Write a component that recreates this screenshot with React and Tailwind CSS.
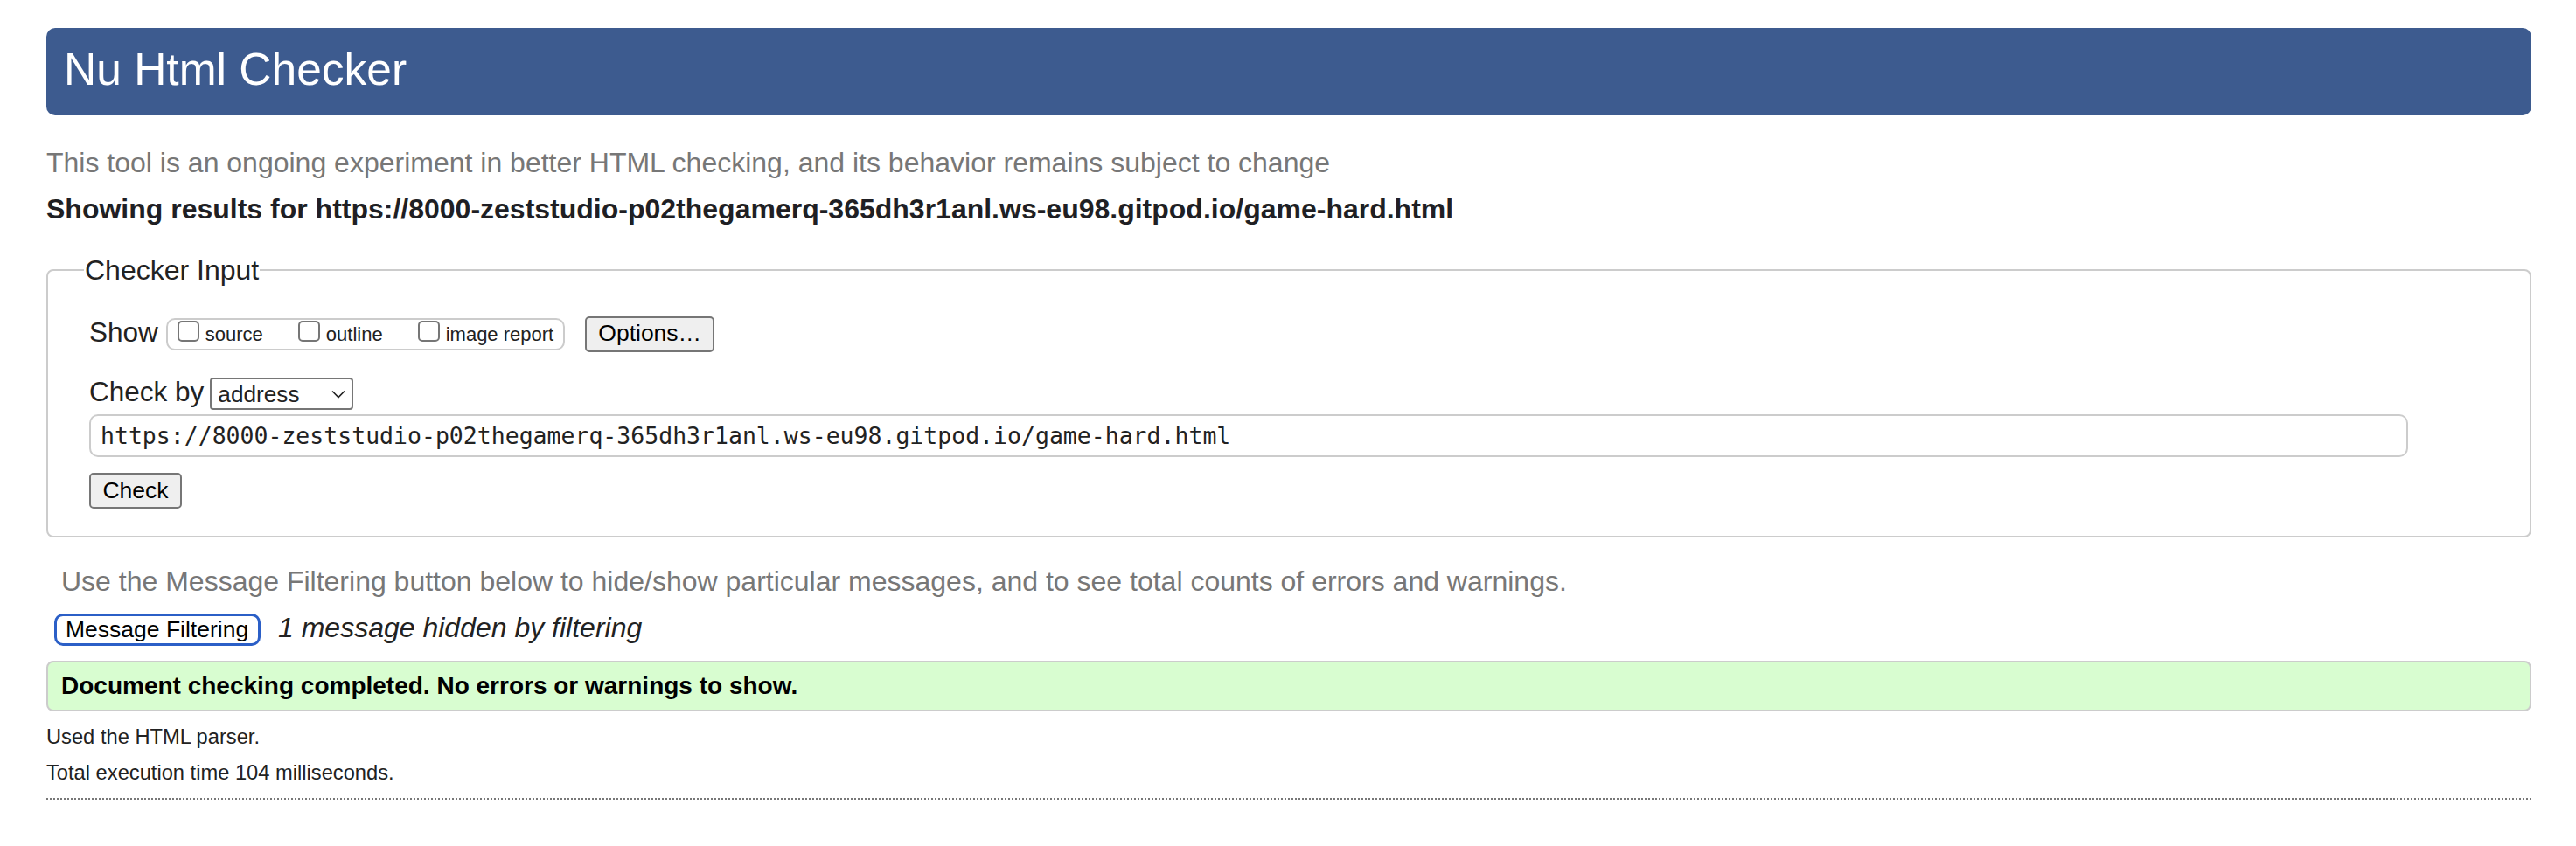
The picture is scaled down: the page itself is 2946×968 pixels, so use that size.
import React from 'react';

const sans = "font-['Liberation_Sans',Arial,sans-serif]";

const Checkbox = ({ label }) => (
  <label className="flex items-end gap-[7px]">
    <span className="block w-[25px] h-[24px] rounded-[5px] border-2 border-[#767676] bg-white" />
    <span className="text-[22px] leading-[16px] text-[#222]">{label}</span>
  </label>
);

const Button = ({ children, className = '' }) => (
  <button
    type="button"
    className={`h-[41px] px-[12px] flex items-center rounded-[5px] border-2 border-[#767676] bg-[#efefef] text-[26.5px] text-black ${className}`}
  >
    {children}
  </button>
);

export default function App() {
  return (
    <div className={`min-h-screen bg-white pl-[53px] pr-[51px] pt-[32px] text-[#222] ${sans}`}>
      <h1 className="h-[100px] rounded-[10px] bg-[#3d5b8f] pl-[20px] pt-[17px] text-[51.5px] leading-[60px] text-white">
        Nu Html Checker
      </h1>

      <p className="mt-[34px] text-[32px] leading-[40px] text-[#777]">
        This tool is an ongoing experiment in better HTML checking, and its behavior remains subject to change
      </p>
      <p className="mt-[13px] text-[32px] font-bold leading-[40px] text-[#1f1f24]">
        Showing results for https://8000-zeststudio-p02thegamerq-365dh3r1anl.ws-eu98.gitpod.io/game-hard.html
      </p>

      <fieldset className="mt-[32px] rounded-[8px] border-2 border-[#ccc] pl-[47px] pr-[20px] pt-[34px] pb-[31px]">
        <legend className="-ml-[6px] px-[1px] text-[32px] leading-[36px]">Checker Input</legend>

        <div className="flex h-[42px] items-center">
          <span className="pb-[4px] text-[31.5px] leading-[40px]">Show</span>
          <div className="ml-[9px] flex h-[37px] items-start gap-[40px] rounded-[10px] border-2 border-[#ccc] pl-[11px] pr-[11px] pt-[1px]">
            <Checkbox label="source" />
            <Checkbox label="outline" />
            <Checkbox label="image report" />
          </div>
          <Button className="ml-[23px] w-[148px] justify-center">Options…</Button>
        </div>

        <div className="mt-[29px] flex h-[37px] items-center">
          <span className="pb-[5px] text-[31.5px] leading-[40px]">Check by</span>
          <div className="ml-[7px] flex h-[37px] w-[164px] items-center justify-between rounded-[4px] border-2 border-[#767676] bg-white pl-[7px] pr-[7px]">
            <span className="text-[26.2px] leading-[30px]">address</span>
            <svg width="16" height="10" viewBox="0 0 16 10" fill="none">
              <path d="M1 1.5 L8 8.5 L15 1.5" stroke="#222" strokeWidth="1.6" />
            </svg>
          </div>
        </div>

        <div className="mt-[5px] flex h-[49px] w-[2652px] items-center rounded-[10px] border-2 border-[#ccc] pl-[11px]">
          <span className="font-['DejaVu_Sans_Mono',monospace] text-[26.5px] leading-[32px] text-[#222]">
            https://8000-zeststudio-p02thegamerq-365dh3r1anl.ws-eu98.gitpod.io/game-hard.html
          </span>
        </div>

        <Button className="mt-[18px] w-[106px] justify-center">Check</Button>
      </fieldset>

      <p className="mt-[30px] pl-[17px] text-[32px] leading-[40px] text-[#777]">
        Use the Message Filtering button below to hide/show particular messages, and to see total counts of errors and warnings.
      </p>

      <div className="mt-[17px] flex h-[37px] items-center pl-[9px]">
        <button
          type="button"
          className="flex h-[37px] w-[236px] items-center rounded-[10px] border-[3px] border-[#2b5fc7] bg-white pl-[10px] text-[26.5px] text-black"
        >
          Message Filtering
        </button>
        <span className="ml-[20px] pb-[5px] text-[32px] italic leading-[40px] text-[#222]">
          1 message hidden by filtering
        </span>
      </div>

      <div className="mt-[17px] flex h-[58px] items-center rounded-[8px] border-2 border-[#ccc] bg-[#d8fdd0] pl-[15px]">
        <strong className="text-[28px] leading-[36px] text-black">
          Document checking completed. No errors or warnings to show.
        </strong>
      </div>

      <div className="mt-[9px] text-[23.7px] leading-[41px] text-[#222]">
        <p>Used the HTML parser.</p>
        <p>Total execution time 104 milliseconds.</p>
      </div>

      <div className="mt-[8px] border-t-2 border-dotted border-[#777]" />
    </div>
  );
}
